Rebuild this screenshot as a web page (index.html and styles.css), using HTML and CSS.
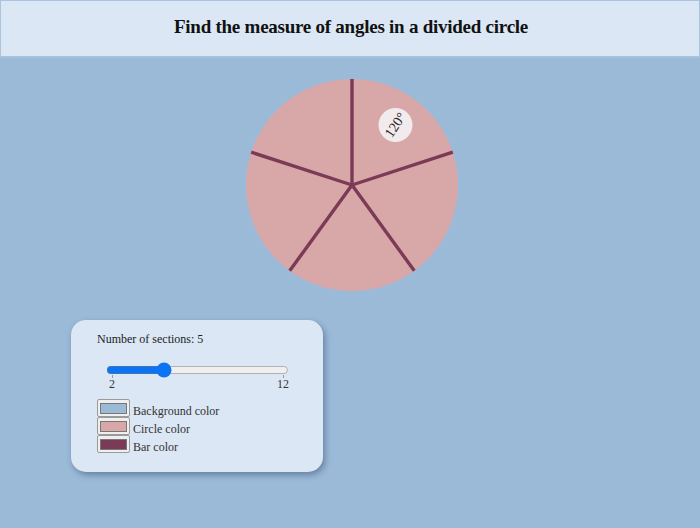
FILE: index.html
```html
<!DOCTYPE html>
<html>
<head>
<meta charset="utf-8">
<link rel="stylesheet" href="styles.css">
</head>
<body>
<header class="top">
  <h1 class="title">Find the measure of angles in a divided circle</h1>
</header>
<main class="stage">
  <svg class="pie" width="220" height="220" viewBox="0 0 220 220">
    <circle cx="110" cy="110" r="106" fill="#d8a7a8"/>
    <g stroke="#7b3a56" stroke-width="3.4" stroke-linecap="butt">
      <line x1="110" y1="110" x2="110" y2="4"/>
      <line x1="110" y1="110" x2="210.8" y2="77.2"/>
      <line x1="110" y1="110" x2="172.3" y2="195.8"/>
      <line x1="110" y1="110" x2="47.7" y2="195.8"/>
      <line x1="110" y1="110" x2="9.2" y2="77.2"/>
    </g>
    <circle cx="153.5" cy="50" r="17" fill="#f1ebed"/>
    <text x="153.5" y="50" transform="rotate(-56 153.5 50)" text-anchor="middle" dominant-baseline="central" class="angle">120°</text>
  </svg>
  <section class="panel">
    <div class="count">Number of sections: 5</div>
    <input class="range" type="range" min="2" max="12" value="5">
    <div class="ticks">
      <div class="tick"><span class="mark"></span><span>2</span></div>
      <div class="tick"><span class="mark"></span><span>12</span></div>
    </div>
    <div class="colors">
      <div class="crow"><span class="swatch"><span class="fill bg"></span></span><span class="lbl">Background color</span></div>
      <div class="crow"><span class="swatch"><span class="fill circ"></span></span><span class="lbl">Circle color</span></div>
      <div class="crow"><span class="swatch"><span class="fill bar"></span></span><span class="lbl">Bar color</span></div>
    </div>
  </section>
</main>
</body>
</html>
```
FILE: styles.css
```css
html, body {
  margin: 0;
  padding: 0;
}
body {
  width: 700px;
  height: 528px;
  background: #9bbad8;
  font-family: "Liberation Serif", "Times New Roman", serif;
  color: #222;
  overflow: hidden;
}
.top {
  box-sizing: border-box;
  height: 58px;
  background: #dbe7f4;
  border: 1px solid #aac4df;
  border-bottom: 2px solid #a9c2da;
  display: flex;
  align-items: center;
  justify-content: center;
  padding-bottom: 3px;
}
.title {
  margin: 0;
  font-size: 19px;
  font-weight: bold;
  letter-spacing: -0.25px;
  color: #111;
  padding-left: 2px;
}
.stage {
  display: flex;
  flex-direction: column;
}
.pie {
  display: block;
  margin: 17px 0 0 242px;
}
.angle {
  font-family: "Liberation Serif", serif;
  font-size: 14px;
  fill: #222;
}
.panel {
  box-sizing: border-box;
  width: 252px;
  height: 152px;
  margin: 25px 0 0 71px;
  background: #dbe7f4;
  border-radius: 15px;
  box-shadow: 2px 3px 6px rgba(40, 60, 90, 0.45);
  padding: 12px 0 0 26px;
  font-size: 12px;
}
.count {
  line-height: 14px;
  color: #222;
}
.range {
  display: block;
  width: 183px;
  margin: 16px 0 0 9px;
  accent-color: #0a74f5;
}
.ticks {
  display: flex;
  justify-content: space-between;
  width: 180px;
  margin: -3px 0 0 12px;
  font-size: 12px;
  line-height: 12px;
  color: #333;
}
.tick {
  display: flex;
  flex-direction: column;
  align-items: center;
}
.mark {
  width: 1px;
  height: 3px;
  background: #999;
}
.colors {
  margin-top: 9px;
  display: flex;
  flex-direction: column;
}
.crow {
  display: flex;
  align-items: center;
  gap: 3px;
  height: 18px;
  color: #333;
}
.lbl {
  padding-top: 7px;
}
.swatch {
  box-sizing: border-box;
  width: 33px;
  height: 18px;
  background: #efefef;
  border: 1px solid #9a9a9a;
  border-radius: 2px;
  display: flex;
  align-items: center;
  justify-content: center;
}
.fill {
  box-sizing: border-box;
  width: 27px;
  height: 11px;
  border: 1px solid #777;
}
.bg { background: #9bbad8; }
.circ { background: #d8a7a8; }
.bar { background: #7b3a56; }
```
